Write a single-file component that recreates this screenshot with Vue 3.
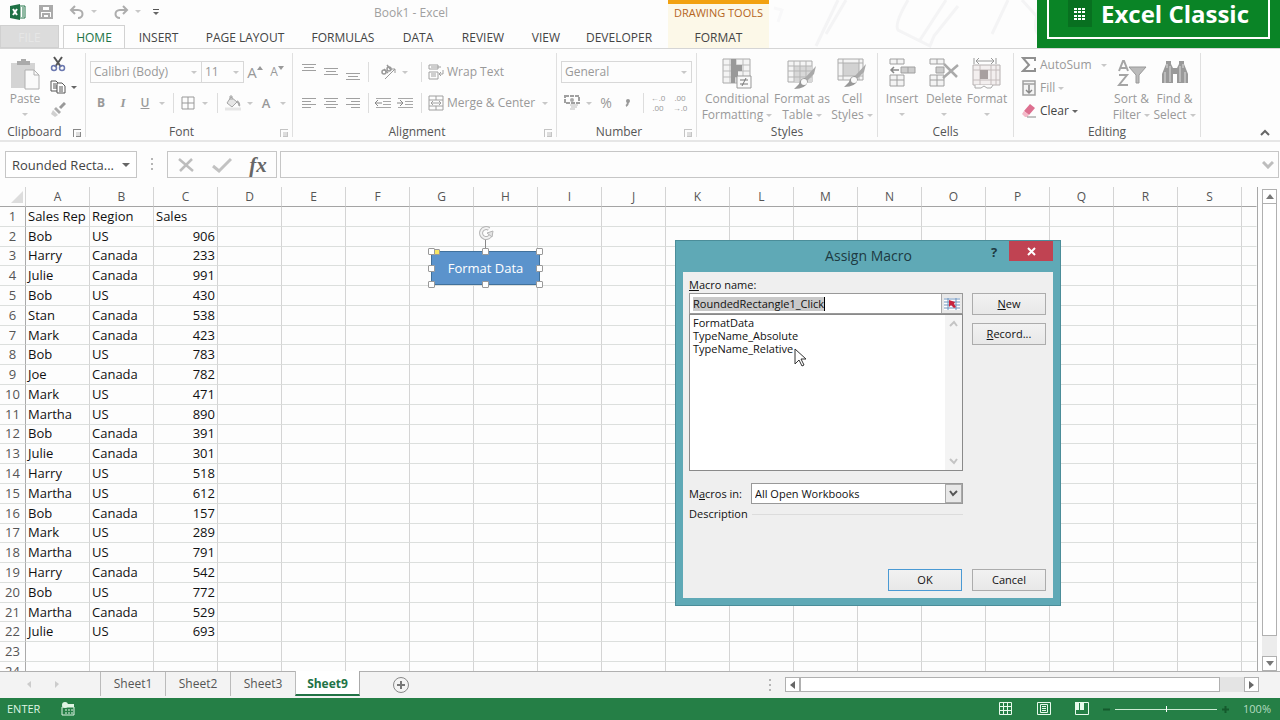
<script setup>
import { ref } from 'vue'

const tabs = ['HOME', 'INSERT', 'PAGE LAYOUT', 'FORMULAS', 'DATA', 'REVIEW', 'VIEW', 'DEVELOPER']
const columns = 'ABCDEFGHIJKLMNOPQRS'.split('')
const data = [
  ['Sales Rep', 'Region', 'Sales'],
  ['Bob', 'US', 906],
  ['Harry', 'Canada', 233],
  ['Julie', 'Canada', 991],
  ['Bob', 'US', 430],
  ['Stan', 'Canada', 538],
  ['Mark', 'Canada', 423],
  ['Bob', 'US', 783],
  ['Joe', 'Canada', 782],
  ['Mark', 'US', 471],
  ['Martha', 'US', 890],
  ['Bob', 'Canada', 391],
  ['Julie', 'Canada', 301],
  ['Harry', 'US', 518],
  ['Martha', 'US', 612],
  ['Bob', 'Canada', 157],
  ['Mark', 'US', 289],
  ['Martha', 'US', 791],
  ['Harry', 'Canada', 542],
  ['Bob', 'US', 772],
  ['Martha', 'Canada', 529],
  ['Julie', 'US', 693],
  [],
  [],
]
const sheets = ['Sheet1', 'Sheet2', 'Sheet3', 'Sheet9']
const macros = ['FormatData', 'TypeName_Absolute', 'TypeName_Relative']
const macroName = ref('RoundedRectangle1_Click')
const handles = ['nw', 'n', 'ne', 'w', 'e', 'sw', 's', 'se']
const zoom = ref(50)
</script>

<template>
  <div class="app">
    <header class="top">
      <svg class="sketch" viewBox="0 0 270 48" aria-hidden="true">
        <g fill="none" stroke="#f4f4f5" stroke-width="3">
          <path d="M68 0 46 46M76 0 56 34" />
          <path d="M138 0q-14 24-10 30l32 16 4-10L188 6" />
          <path d="M176 0 150 40" />
          <path d="M238 0 222 34M252 0l38 42M270 4q-8 24-2 30" />
          <path d="M4 8l8 2-4 12" stroke="#f8f8f9" />
        </g>
      </svg>
      <div class="titlebar">
        <div class="quick">
          <svg width="18" height="18" viewBox="0 0 18 18" role="img" aria-label="Excel">
            <path d="M9 3h7v12H9z" fill="#fff" stroke="#217346" />
            <path d="M10 5h2M13 5h2M10 7h2M13 7h2M10 9h2M13 9h2M10 11h2M13 11h2M10 13h2M13 13h2" stroke="#217346" />
            <path d="M1 3 11 1v16L1 15z" fill="#1e7145" />
            <path d="m4 6 4 6M8 6l-4 6" stroke="#fff" stroke-width="2" />
          </svg>
          <button aria-label="Save">
            <svg width="14" height="14" viewBox="0 0 14 14"><path d="M1 1h12v12H1zM3 1v5h8V1M4 13V9h6v4" fill="none" stroke="#aaa" stroke-width="2" /></svg>
          </button>
          <button aria-label="Undo">
            <svg width="16" height="14" viewBox="0 0 16 14"><path d="M6 1 2 5l4 4M2 5h7c6 0 6 8 0 8" fill="none" stroke="#adadad" stroke-width="2" /></svg>
            <i class="dd pale"></i>
          </button>
          <button aria-label="Redo">
            <svg width="16" height="14" viewBox="0 0 16 14"><path d="m10 1 4 4-4 4M14 5H7c-6 0-6 8 0 8" fill="none" stroke="#adadad" stroke-width="2" /></svg>
            <i class="dd pale"></i>
          </button>
          <button aria-label="Customize toolbar" class="customize"><i class="bar"></i><i class="dd dark"></i></button>
        </div>
        <div class="title">Book1 - Excel</div>
        <div class="context">DRAWING TOOLS</div>
      </div>
      <nav class="tabs">
        <button class="file">FILE</button>
        <button v-for="(t, i) in tabs" :key="t" :class="{ active: i === 0 }">{{ t }}</button>
        <button class="format">FORMAT</button>
      </nav>
      <div class="banner">
        <div class="bannerBox">
          <span class="bannerIcon">
            <svg width="12" height="14" viewBox="0 0 12 14"><path d="M0 2h3M4 2h3M8 2h3M0 5h3M4 5h3M8 5h3M0 9h3M4 9h3M8 9h3M0 12h3M4 12h3M8 12h3" stroke="#fff" stroke-width="2" /></svg>
          </span>
          Excel Classic
        </div>
      </div>
    </header>

    <section class="ribbon">
      <div class="group g-clip">
        <div class="body">
          <button class="big">
            <svg width="30" height="32" viewBox="0 0 30 32">
              <path d="M1 5h24v25H1z" fill="#d4d4d4" />
              <path d="M7 7V3h4V1h5v2h4v4z" fill="#aaa" />
              <path d="M15 12h9l5 5v14H15z" fill="#fafafa" stroke="#b0b0b0" />
              <path d="M24 12v5h5" fill="none" stroke="#b0b0b0" />
            </svg>
            <span>Paste</span><i class="dd pale"></i>
          </button>
          <div class="smalls">
            <button aria-label="Cut">
              <svg width="16" height="16" viewBox="0 0 16 16">
                <path d="m4 1 7 10M12 1 5 11" stroke="#555" stroke-width="2" />
                <circle cx="4" cy="12" r="2.5" fill="none" stroke="#6b78b0" stroke-width="1.5" /><circle cx="12" cy="12" r="2.5" fill="none" stroke="#6b78b0" stroke-width="1.5" />
              </svg>
            </button>
            <button aria-label="Copy">
              <svg width="16" height="16" viewBox="0 0 16 16">
                <path d="M1 2h5l3 3v7H1zM3 5h3M3 7h4M3 9h4" fill="#fff" stroke="#555" />
                <path d="M7 4h5l3 3v7H7z" fill="#fff" stroke="#555" /><path d="M9 8h4M9 10h4M9 12h4" stroke="#555" />
              </svg>
              <i class="dd dark"></i>
            </button>
            <button aria-label="Format Painter">
              <svg width="16" height="16" viewBox="0 0 16 16">
                <path d="m15 1-5 5" stroke="#999" stroke-width="3" /><path d="m6 5 5 5-2 2-5-5z" fill="#aaa" /><path d="m3 8 5 5-3 2-4-3z" fill="#d0d0d0" />
              </svg>
            </button>
          </div>
        </div>
        <div class="caption">Clipboard<button class="launch dark" aria-label="Clipboard options"></button></div>
      </div>

      <div class="group g-font">
        <div class="body col">
          <div class="row">
            <label class="combo wide"><select aria-label="Font" disabled><option>Calibri (Body)</option></select><i class="dd pale"></i></label>
            <label class="combo size"><select aria-label="Font size" disabled><option>11</option></select><i class="dd pale"></i></label>
            <button class="grow" aria-label="Increase font size">A<svg width="6" height="4"><path d="m0 4 3-4 3 4z" fill="#999" /></svg></button>
            <button class="grow less" aria-label="Decrease font size">A<svg width="6" height="4"><path d="m0 0 3 4 3-4z" fill="#999" /></svg></button>
          </div>
          <div class="row fontTools">
            <button class="b">B</button><button class="i">I</button><button class="u">U</button>
            <button aria-label="Underline style"><i class="dd pale"></i></button><i class="sep"></i>
            <button aria-label="Borders"><svg width="14" height="14"><path d="M1 1h12v12H1zM7 1v12M1 7h12" fill="none" stroke="#999" /></svg></button>
            <button aria-label="Border style"><i class="dd pale"></i></button><i class="sep"></i>
            <button aria-label="Fill color">
              <svg width="16" height="16" viewBox="0 0 16 16"><path d="m6 2 6 5-5 5-5-4z" fill="#e6e6e6" stroke="#a5a5a5" /><path d="M5 5V1h2v4" fill="none" stroke="#a5a5a5" /><path d="M12 6q3 3 2 5" fill="none" stroke="#aaa" stroke-width="2" /><path d="M0 14h16" stroke="#e6e6e6" stroke-width="3" /></svg>
            </button>
            <button aria-label="Fill colors"><i class="dd pale"></i></button>
            <button class="fc">A</button>
            <button aria-label="Font colors"><i class="dd pale"></i></button>
          </div>
        </div>
        <div class="caption">Font<button class="launch" aria-label="Font options"></button></div>
      </div>

      <div class="group g-align">
        <div class="body alignGrid">
          <button aria-label="Top align"><svg width="14" height="18"><path d="M0 1.500h14M2 4.500h10M0 7.500h14" stroke="#a0a0a0" /></svg></button>
          <button aria-label="Middle align"><svg width="14" height="18"><path d="M0 5.500h14M2 8.500h10M0 11.500h14" stroke="#a0a0a0" /></svg></button>
          <button aria-label="Bottom align"><svg width="14" height="18"><path d="M0 10.500h14M2 13.500h10M0 16.500h14" stroke="#a0a0a0" /></svg></button>
          <i class="sep"></i>
          <button class="orient" aria-label="Orientation">
            <svg width="18" height="18" viewBox="0 0 18 18"><g fill="none" stroke="#999"><path d="m5 16 10-10M11 6h4v4" /><circle cx="4" cy="9" r="2" stroke-width="1.500" /><path d="m4 6 4 4M7 2l4 5" stroke-width="1.500" /><circle cx="9" cy="6" r="2" stroke-width="1.500" /></g></svg>
            <i class="dd pale"></i>
          </button>
          <i class="sep"></i>
          <button class="lab">
            <svg width="16" height="16" viewBox="0 0 16 16"><g fill="none" stroke="#a0a0a0"><path d="M1 1h9v4H1zM1 8h9v7H1zM3 3h10M3 10h5M3 12h5M15 6v4h-4M13 8l-2 2 2 2" /></g></svg>
            Wrap Text
          </button>
          <button aria-label="Align left"><svg width="14" height="12"><path d="M0 1.500h14M0 4.500h9M0 7.500h14M0 10.500h9" stroke="#a0a0a0" /></svg></button>
          <button aria-label="Center"><svg width="14" height="12"><path d="M0 1.500h14M2 4.500h10M0 7.500h14M2 10.500h10" stroke="#a0a0a0" /></svg></button>
          <button aria-label="Align right"><svg width="14" height="12"><path d="M0 1.500h14M5 4.500h9M0 7.500h14M5 10.500h9" stroke="#a0a0a0" /></svg></button>
          <i class="sep"></i>
          <div class="indents">
            <button aria-label="Decrease indent"><svg width="16" height="12"><path d="M1 1.500h15M8 4.500h8M8 7.500h8M1 10.500h15" stroke="#a8a8a8" /><path d="M0 6h7M3 3 0 6l3 3" fill="none" stroke="#888" /></svg></button>
            <button aria-label="Increase indent"><svg width="16" height="12"><path d="M1 1.500h15M8 4.500h8M8 7.500h8M1 10.500h15" stroke="#a8a8a8" /><path d="M0 6h6M3 3l3 3-3 3" fill="none" stroke="#888" /></svg></button>
          </div>
          <i class="sep"></i>
          <button class="lab">
            <svg width="16" height="16" viewBox="0 0 16 16"><g fill="none" stroke="#a0a0a0"><path d="M1 1h14v14H1zM1 5h14M1 11h14M8 1v4M8 11v4M3 8h10M5 6 3 8l2 2M11 6l2 2-2 2" /></g></svg>
            Merge &amp; Center <i class="dd pale"></i>
          </button>
        </div>
        <div class="caption">Alignment<button class="launch" aria-label="Alignment options"></button></div>
      </div>

      <div class="group g-num">
        <div class="body col">
          <div class="row"><label class="combo full"><select aria-label="Number format" disabled><option>General</option></select><i class="dd pale"></i></label></div>
          <div class="row numTools">
            <button aria-label="Accounting format"><svg width="16" height="16" viewBox="0 0 16 16"><path d="M1 1h14v7H1z" fill="none" stroke="#a0a0a0" stroke-width="2" stroke-dasharray="4 1" /><circle cx="8" cy="5" r="2" fill="#aaa" /><path d="M6 10h8M7 12h6M6 14h5" stroke="#bbb" /></svg></button>
            <button aria-label="Accounting formats"><i class="dd pale"></i></button>
            <button class="pct">%</button>
            <button class="comma" aria-label="Comma style"><svg width="6" height="10"><path d="M3 3v1q0 3-2 4" fill="none" stroke="#999" stroke-width="2" /><circle cx="3" cy="3" r="2" fill="#999" /></svg></button><i class="sep"></i>
            <button class="dec"><span>←.0</span><span>.00</span></button>
            <button class="dec"><span>.00</span><span>→.0</span></button>
          </div>
        </div>
        <div class="caption">Number<button class="launch" aria-label="Number options"></button></div>
      </div>

      <div class="group g-styles">
        <div class="body bigs">
          <button class="big">
            <svg width="30" height="32" viewBox="0 0 30 32">
              <path d="M1 1h27v24H1z" fill="#f4f4f4" stroke="#aaa" /><path d="M1 7h27M1 13h27M1 19h27M8 1v24M14 1v24M21 1v24" stroke="#bbb" />
              <path d="M9 1h5v6h-5zM9 7h11v6H9zM9 13h7v6H9zM9 19h4v6H9z" fill="#999" />
              <path d="M15 18h14v12H15z" fill="#fafafa" stroke="#999" /><path d="M18 22h8M18 26h8M24 20l-4 8" stroke="#777" />
            </svg>
            <span>Conditional</span><span>Formatting <i class="dd pale"></i></span>
          </button>
          <button class="big">
            <svg width="30" height="32" viewBox="0 0 30 32">
              <path d="M1 3h24v21H1z" fill="#f4f4f4" stroke="#aaa" /><path d="M7 8h18v16H7z" fill="#d8d8d8" /><path d="M1 8h24M1 13h24M1 19h24M7 3v21M13 3v21M19 3v21" stroke="#b5b5b5" />
              <path d="m29 8-2 8-7 7-3-2z" fill="#aaa" /><path d="M18 20q-5 0-6 6l-5 5q12 0 14-8z" fill="#999" /><circle cx="17" cy="24" r="3" fill="#fafafa" />
            </svg>
            <span>Format as</span><span>Table <i class="dd pale"></i></span>
          </button>
          <button class="big">
            <svg width="30" height="32" viewBox="0 0 30 32">
              <path d="M1 1h25v21H1z" fill="#f4f4f4" stroke="#aaa" /><path d="M6 5h16v13H6z" fill="#d2d2d2" /><path d="M1 5h25M1 18h25M6 1v21M22 1v21" stroke="#b0b0b0" />
              <path d="m29 6-2 8-7 7-3-2z" fill="#aaa" /><path d="M18 18q-5 0-6 6l-5 5q12 0 14-8z" fill="#999" /><circle cx="17" cy="22" r="3" fill="#fafafa" />
            </svg>
            <span>Cell</span><span>Styles <i class="dd pale"></i></span>
          </button>
        </div>
        <div class="caption">Styles</div>
      </div>

      <div class="group g-cells">
        <div class="body bigs">
          <button class="big">
            <svg width="30" height="32" viewBox="0 0 30 32"><path d="M3 1h14v5H3zM10 1v5M3 17h14v11H3zM10 17v11M3 22h14" fill="#f4f4f4" stroke="#a0a0a0" /><path d="M14 9h14v6H14zM21 9v6" fill="#ccc" stroke="#a0a0a0" /><path d="M4 12h8M7 9l-3 3 3 3" fill="none" stroke="#888" stroke-width="1.500" /></svg>
            <span>Insert</span><i class="dd pale"></i>
          </button>
          <button class="big">
            <svg width="30" height="32" viewBox="0 0 30 32"><path d="M1 1h14v5H1zM8 1v5M1 17h14v11H1zM8 17v11M1 22h14" fill="#f4f4f4" stroke="#a0a0a0" /><path d="M7 9h8v6H7z" fill="#ccc" stroke="#a0a0a0" /><path d="m15 6 13 13M29 7 14 20" fill="none" stroke="#aaa" stroke-width="2.500" /></svg>
            <span>Delete</span><i class="dd pale"></i>
          </button>
          <button class="big">
            <svg width="30" height="32" viewBox="0 0 30 32"><path d="M1 7h27v20H1z" fill="#f3efef" stroke="#b5b0b0" /><path d="M1 12h27M1 22h27M8 7v20M19 7v20M24 7v20" stroke="#c4bcbc" /><path d="M8 12h8v9H8z" fill="#a8a0a0" /><path d="M2 0v6M24 0v6M4 3h18M7 0 4 3l3 3M19 0l3 3-3 3" fill="none" stroke="#999" /><path d="M3 27v3h6l3-2 3 2h4l2-3" fill="#fafafa" stroke="#aaa" /></svg>
            <span>Format</span><i class="dd pale"></i>
          </button>
        </div>
        <div class="caption">Cells</div>
      </div>

      <div class="group g-edit">
        <div class="body">
          <div class="editList">
            <button class="lab"><svg width="16" height="16" viewBox="0 0 16 16"><path d="M14 4V1H2l6 7-6 6h12v-3" fill="none" stroke="#909090" stroke-width="2" /></svg>AutoSum <i class="dd pale far"></i></button>
            <button class="lab"><svg width="16" height="16" viewBox="0 0 16 16"><path d="M2 1h12v14H2zM2 4h12" fill="#f4f4f4" stroke="#a0a0a0" stroke-width="1.500" /><path d="M8 5v8M5 10l3 3 3-3" fill="none" stroke="#888" stroke-width="1.500" /></svg>Fill <i class="dd pale"></i></button>
            <button class="lab on"><svg width="16" height="16" viewBox="0 0 16 16"><path d="m9 1 5 4-6 7-5-4z" fill="#dd6f8f" /><path d="m3 8 5 4-2 2H4l-3-3z" fill="#f3b9c8" /><path d="M6 14h9" stroke="#888" /></svg>Clear <i class="dd dark"></i></button>
          </div>
          <button class="big">
            <svg width="30" height="32" viewBox="0 0 30 32"><path d="m2 13 4-10h1l4 10M4 10h6M2 17h8L2 27h9" fill="none" stroke="#a5a5a5" stroke-width="2" /><path d="M12 9h17l-7 8v8h-3v-8z" fill="#bbb" stroke="#999" /></svg>
            <span>Sort &amp;</span><span>Filter <i class="dd pale"></i></span>
          </button>
          <button class="big">
            <svg width="30" height="32" viewBox="0 0 30 32"><path d="M6 3h5v3l2 4h4l2-4V3h5v3l4 10v9H17v-9h-4v9H2v-9L6 6z" fill="#999" /><path d="M7 6v4M23 6v4M5 14v11M25 14v11M10 8v16M20 8v16" stroke="#ddd" /></svg>
            <span>Find &amp;</span><span>Select <i class="dd pale"></i></span>
          </button>
        </div>
        <div class="caption">Editing</div>
      </div>
      <button class="collapse" aria-label="Collapse ribbon"><svg width="10" height="8"><path d="m1 6 4-4 4 4" fill="none" stroke="#666" stroke-width="2" /></svg></button>
    </section>

    <section class="formula">
      <div class="namebox"><input aria-label="Name box" value="Rounded Recta..." /><button aria-label="Names"><i class="dd dark wideDd"></i></button></div>
      <i class="dots"></i>
      <div class="fxbox">
        <button aria-label="Cancel entry"><svg width="18" height="16"><path d="m2 2 14 12M15 2 3 14" stroke="#bdbdbd" stroke-width="2.500" /></svg></button>
        <button aria-label="Accept entry"><svg width="20" height="16"><path d="m1 9 6 5L19 2" fill="none" stroke="#c2c2c2" stroke-width="3" /></svg></button>
        <button class="fx" aria-label="Insert function">fx</button>
      </div>
      <div class="fbar"><input aria-label="Formula" /><svg width="12" height="8"><path d="m1 1 5 5 5-5" fill="none" stroke="#bdbdbd" stroke-width="3" /></svg></div>
    </section>

    <main class="sheet">
      <div class="grid">
        <table>
          <colgroup><col class="rh" /><col v-for="c in columns" :key="c" class="cc" /><col /></colgroup>
          <thead><tr><th><i class="corner"></i></th><th v-for="c in columns" :key="c">{{ c }}</th><th></th></tr></thead>
          <tbody>
            <tr v-for="(r, i) in data" :key="i">
              <th>{{ i + 1 }}</th>
              <td v-for="(c, j) in columns" :key="c" :class="{ num: j === 2 && i > 0 }">{{ r[j] }}</td>
              <td></td>
            </tr>
          </tbody>
        </table>
      </div>
      <div class="vscroll">
        <button aria-label="Scroll up"><svg width="8" height="5"><path d="m0 5 4-5 4 5z" fill="#777" /></svg></button>
        <i class="thumb"></i><i class="track"></i>
        <button aria-label="Scroll down"><svg width="8" height="5"><path d="m0 0 4 5 4-5z" fill="#777" /></svg></button>
      </div>

      <div class="shape">
        <svg class="rotate" width="16" height="26" viewBox="0 0 16 26"><path d="M7.500 13v13" stroke="#888" /><path d="M13 8a5 5 0 1 1-2-5" fill="none" stroke="#b5b5b5" stroke-width="4" /><path d="M13 8a5 5 0 1 1-2-5" fill="none" stroke="#f2f2f2" stroke-width="2" /><path d="m9 7 6-2-1 6z" fill="#e4e4e4" stroke="#b5b5b5" /></svg>
        Format Data
        <i v-for="h in handles" :key="h" class="handle" :class="h"></i>
        <i class="handle yellow"></i>
      </div>

      <form class="dialog" role="dialog" aria-label="Assign Macro" @submit.prevent>
        <div class="dhead">
          <h2>Assign Macro</h2>
          <button type="button" class="help">?</button>
          <button type="button" class="close" aria-label="Close"><svg width="9" height="9"><path d="m1 1 7 7M8 1 1 8" stroke="#fff" stroke-width="2" /></svg></button>
        </div>
        <div class="dbody">
          <div class="left">
            <label for="macro"><u>M</u>acro name:</label>
            <div class="nameField">
              <input id="macro" v-model="macroName" /><i class="caret"></i>
              <button type="button" aria-label="Pick reference">
                <svg width="16" height="12" viewBox="0 0 16 12"><path d="M0 0h16v12H0z" fill="#fff" /><path d="M0 1h16M0 4h16M0 7h16M0 10h16M4 0v12M12 0v12" stroke="#6f93bd" /><path d="m5 2 6 2-1 2 2 3-2 1-3-3-2 2z" fill="#c8253e" /></svg>
              </button>
            </div>
            <div class="list">
              <select multiple size="11" aria-label="Macros"><option v-for="m in macros" :key="m">{{ m }}</option></select>
              <div class="lscroll">
                <svg width="9" height="7"><path d="m1 6 4-4 3 4" fill="none" stroke="#c4c4c4" stroke-width="2" /></svg>
                <svg width="9" height="7"><path d="m1 1 4 4 3-4" fill="none" stroke="#c4c4c4" stroke-width="2" /></svg>
              </div>
            </div>
            <div class="inRow">
              <label for="inbooks">M<u>a</u>cros in:</label>
              <div class="inSel">
                <select id="inbooks"><option>All Open Workbooks</option></select>
                <span><svg width="9" height="7"><path d="m1 1 3 4 4-4" fill="none" stroke="#555" stroke-width="2" /></svg></span>
              </div>
            </div>
            <div class="desc">Description<i></i></div>
          </div>
          <div class="right">
            <button type="button"><u>N</u>ew</button>
            <button type="button"><u>R</u>ecord...</button>
          </div>
          <div class="foot"><button class="ok">OK</button><button type="button">Cancel</button></div>
        </div>
        <svg class="pointer" width="14" height="20" viewBox="0 0 14 20"><path d="M1 1v15l4-4 3 6 2-1-3-6h5z" fill="#fff" stroke="#333" /></svg>
      </form>
    </main>

    <footer>
      <div class="sheetbar">
        <div class="nav">
          <button aria-label="Previous sheets"><svg width="4" height="7"><path d="M4 0v7L0 3z" fill="#ccc" /></svg></button>
          <button aria-label="Next sheets"><svg width="4" height="7"><path d="M0 0v7l4-4z" fill="#ccc" /></svg></button>
        </div>
        <button v-for="s in sheets" :key="s" class="stab" :class="{ active: s === 'Sheet9' }">{{ s }}</button>
        <button class="add" aria-label="New sheet"><svg width="18" height="18"><circle cx="9" cy="9" r="7.500" fill="none" stroke="#888" /><path d="M9 5v8M5 9h8" stroke="#777" stroke-width="2" /></svg></button>
        <i class="dots"></i>
        <div class="hscroll">
          <button aria-label="Scroll left"><svg width="5" height="8"><path d="M5 0v8L0 4z" fill="#666" /></svg></button>
          <i class="thumb"></i><i class="track"></i>
          <button aria-label="Scroll right"><svg width="5" height="8"><path d="M0 0v8l5-4z" fill="#666" /></svg></button>
        </div>
      </div>
      <div class="status">
        <span>ENTER</span>
        <button aria-label="Record macro"><svg width="14" height="14" viewBox="0 0 14 14"><path d="M1 5h12v8H1zM7 3h6M4 8h2M7 8h2M10 8h2M4 11h2M7 11h2M10 11h2" fill="none" stroke="#dff5e4" /><path d="M6 2h7v3H6z" fill="#dff5e4" /><circle cx="4" cy="3" r="3" fill="#dff5e4" /></svg></button>
        <div class="views">
          <button aria-label="Normal"><svg width="14" height="14"><path d="M.5.500h12v12h-12zM4.500 1v12M8.500 1v12M1 4.500h12M1 8.500h12" fill="none" stroke="#e8faec" /></svg></button>
          <button aria-label="Page layout"><svg width="14" height="14"><path d="M.5.500h13v12H.5zM3.500 2.500h7v8h-7zM5 4.500h4M5 6.500h4M5 8.500h4" fill="none" stroke="#e8faec" /></svg></button>
          <button aria-label="Page break"><svg width="14" height="14"><path d="M.5.500h13v12H.5z" fill="none" stroke="#e8faec" /><path d="M0 0h4v8H0zM5 0h4v8H5z" fill="#e8faec" /></svg></button>
        </div>
        <button class="z" aria-label="Zoom out"><svg width="7" height="7"><path d="M0 3.500h7" stroke="#145a2c" stroke-width="2" /></svg></button>
        <input v-model="zoom" type="range" aria-label="Zoom" />
        <button class="z" aria-label="Zoom in"><svg width="7" height="7"><path d="M0 3.500h7M3.500 0v7" stroke="#145a2c" stroke-width="2" /></svg></button>
        <span class="pctz">100%</span>
      </div>
    </footer>
  </div>
</template>

<style>
body { margin: 0; background: #fdfdfd; }
</style>

<style scoped>
* { box-sizing: border-box; }
.app { height: 100vh; display: flex; flex-direction: column; overflow: hidden; background: #fdfdfd; font: 12px/16px "Open Sans", "Noto Sans", sans-serif; color: #444; }
button { font: inherit; color: inherit; background: none; border: 0; padding: 0; margin: 0; display: flex; align-items: center; justify-content: center; white-space: nowrap; }
input, select { font: inherit; color: inherit; margin: 0; padding: 0; border: 0; border-radius: 0; outline: 0; background: transparent; appearance: none; min-width: 0; opacity: 1; }
svg { display: block; flex: none; }
.dd { display: inline-block; flex: none; width: 0; height: 0; border: 3px solid transparent; border-top-color: #666; border-bottom: 0; vertical-align: middle; }
.dd.pale { border-top-color: #c8c8c8; }
.dd.wideDd { border-width: 4px; border-bottom: 0; }

.top { position: relative; flex: none; border-bottom: 1px solid #d5d5d5; }
.sketch { position: absolute; left: 770px; top: 0; width: 270px; height: 48px; }
.titlebar { display: grid; grid-template-columns: 154px 514px 101px; height: 25px; line-height: 24px; }
.quick { display: flex; align-items: center; padding: 0 0 2px 9px; gap: 12px; }
.quick button { gap: 7px; }
.quick button + button { margin-left: 4px; gap: 6px; }
.quick .customize { flex-direction: column; gap: 2px; margin: 0; }
.quick button + .customize { margin-left: 0; gap: 2px; }
.bar { width: 6px; height: 1px; background: #555; }
.title { text-align: center; color: #a0a0a0; padding-top: 1px; }
.context { background: #fcf8e8; border-top: 4px solid #f2a110; color: #b5651d; text-align: center; line-height: 18px; font-size: 11px; }
.tabs { display: grid; grid-template-columns: 63px 62px 67px 106px 90px 60px 70px 56px 90px; grid-auto-flow: column; grid-auto-columns: 105px; height: 23px; }
.tabs button { color: #444; padding-top: 2px; }
.tabs .file { background: #dcdcdc; color: #e6e6e6; margin-right: 4px; border: 1px solid #d0d0d0; }
.tabs .active { color: #217346; background: #fefefe; border: 1px solid #d2d2d2; border-bottom: 0; padding-top: 1px; }
.tabs .format { margin-left: 4px; background: #fcf8e8; }
.banner { position: absolute; right: 0; top: 0; width: 243px; height: 48px; background: #0a8426; padding: 0 10px; }
.bannerBox { height: 39px; border: 2px solid #fff; border-top: 0; display: flex; padding-left: 19px; gap: 9px; color: #fff; font-size: 24px; font-weight: 700; line-height: 28px; white-space: nowrap; }
.bannerIcon { width: 24px; height: 27px; background: #087020; display: flex; align-items: center; justify-content: center; }

.ribbon { position: relative; flex: none; height: 93px; display: flex; border-bottom: 2px solid #e6e6e6; color: #999; padding-top: 4px; }
.group { flex: none; display: flex; flex-direction: column; background: linear-gradient(#e0e0e0, #e0e0e0) right top / 1px 84px no-repeat; height: 87px; padding-right: 1px; }
.g-clip { width: 86px; } .g-font { width: 207px; } .g-align { width: 264px; } .g-num { width: 140px; } .g-styles { width: 181px; } .g-cells { width: 136px; } .g-edit { width: 187px; }
.body { flex: 1; display: flex; min-height: 0; }
.body.col { flex-direction: column; padding: 8px 0 0 4px; gap: 9px; }
.caption { position: relative; height: 16px; text-align: center; color: #555; flex: none; }
.g-clip .caption { padding-right: 16px; }
.g-align .caption, .g-num .caption, .g-font .caption { padding-right: 15px; }
.launch { position: absolute; right: 4px; top: 5px; width: 8px; height: 8px; border: 1px solid #c4c4c4; border-right: 0; border-bottom: 0; }
.launch::after { content: ""; position: absolute; right: 0; bottom: 0; width: 4px; height: 4px; border: 1px solid #c4c4c4; border-left: 0; border-top: 0; background: #ddd; }
.launch.dark, .launch.dark::after { border-color: #888; }
.row { display: flex; align-items: center; height: 22px; }
.big { flex-direction: column; justify-content: flex-start; padding-top: 5px; height: 70px; }
.big svg { margin-bottom: 1px; }
.big > .dd { margin-top: 6px; }
.g-clip .big { width: 50px; }
.smalls { display: flex; flex-direction: column; gap: 7px; padding-top: 3px; }
.smalls button { justify-content: flex-start; gap: 5px; }
.combo { display: grid; align-items: center; height: 22px; border: 1px solid #d8d8d8; }
.combo select, .combo .dd { grid-area: 1 / 1; }
.combo select { padding-left: 3px; color: #999; height: 20px; width: 100%; }
.combo .dd { justify-self: end; margin-right: 4px; pointer-events: none; }
.wide { width: 112px; } .size { width: 42px; border-left: 0; } .full { width: 131px; }
.grow { width: 22px; font-size: 15px; align-items: flex-start; }
.grow svg { margin-top: 2px; }
.grow.less { font-size: 12px; }
.fontTools { display: grid; grid-template-columns: 22px 22px 22px 12px 10px 20px 14px 10px 22px 11px 22px 11px; }
.sep { width: 1px; height: 20px; background: #ddd; justify-self: center; }
.b { font-weight: 700; } .i { font: italic bold 13px/16px "Liberation Serif", serif; } .u { text-decoration: underline; font-weight: 600; } .fc { font-weight: 600; font-size: 13px; }
.alignGrid { display: grid; grid-template-columns: 22px 22px 22px 8px 44px 10px 1fr; grid-template-rows: 22px 22px; row-gap: 9px; padding: 8px 0 0 5px; align-items: center; }
.orient { gap: 4px; }
.indents { display: flex; justify-content: space-around; }
.lab { gap: 3px; justify-content: flex-start; }
.alignGrid .lab { padding-left: 2px; }
.alignGrid .lab .dd { margin-left: 4px; }
.numTools { display: grid; grid-template-columns: 22px 12px 22px 22px 8px 22px 22px; }
.pct { font-size: 14px; }
.dec { flex-direction: column; font-size: 8px; line-height: 10px; }
.bigs { display: grid; }
.g-styles .bigs { grid-template-columns: 80px 50px 50px; }
.g-cells .bigs { grid-template-columns: 42px 42px 44px; padding-left: 3px; }
.editList { display: flex; flex-direction: column; gap: 7px; padding: 4px 0 0 7px; width: 96px; }
.editList .on { color: #444; }
.far { margin-left: 6px; }
.g-edit .big { width: 43px; }
.collapse { position: absolute; right: 10px; bottom: 3px; }

.formula { flex: none; display: flex; align-items: center; height: 45px; padding: 0 1px 0 5px; color: #444; font-size: 13px; }
.namebox { display: flex; width: 132px; height: 27px; border: 1px solid #c6c6c6; background: #fff; }
.namebox input { flex: 1; padding-left: 6px; }
.namebox button { width: 20px; }
.dots { width: 2px; height: 14px; margin: 0 14px; background: repeating-linear-gradient(#b5b5b5 0 2px, transparent 2px 5px); }
.fxbox { display: grid; grid-template-columns: 36px 36px 36px; width: 110px; height: 27px; border: 1px solid #c6c6c6; }
.fx { font: italic bold 21px/24px "Liberation Serif", serif; color: #666; }
.fbar { flex: 1; display: flex; align-items: center; height: 27px; margin-left: 3px; border: 1px solid #c6c6c6; padding-right: 4px; }
.fbar input { flex: 1; }

.sheet { position: relative; flex: 1; min-height: 0; display: flex; gap: 4px; padding-right: 3px; }
.grid { flex: 1; overflow: hidden; min-width: 0; border-right: 1px solid #a8a8a8; }
table { width: 100%; height: 495px; table-layout: fixed; border-collapse: separate; border-spacing: 0; font-size: 13px; line-height: 17px; }
.rh { width: 26px; } .cc { width: 64px; }
th, td { padding: 0 2px; overflow: hidden; white-space: nowrap; font-weight: 400; color: #111; border-right: 1px solid #d4d4d4; border-bottom: 1px solid #dcdfdd; }
td:last-child, th:last-child { border-right-color: transparent; }
th { color: #555; text-align: center; }
tbody th { border-right-color: #aaa; padding: 0; }
thead tr { height: 20px; }
thead th { border-bottom-color: #a4a4a4; font-size: 12px; }
.num { text-align: right; }
.corner { display: block; width: 0; height: 0; margin-left: 9px; border: 6px solid transparent; border-right-color: #ddd; border-bottom-color: #ddd; }
.vscroll { flex: none; width: 15px; display: flex; flex-direction: column; padding-top: 2px; }
.vscroll button, .hscroll button { flex: none; width: 15px; height: 15px; border: 1px solid #b0b0b0; background: #fff; }
.vscroll .thumb { flex: 434; border: 1px solid #b0b0b0; border-top: 0; background: #fff; }
.vscroll .track { flex: 20; background: #ececec; }

.shape { position: absolute; left: 431px; top: 64px; width: 109px; height: 34px; background: #5b93cc; border: 1px solid #41719c; color: #fff; font-size: 13px; display: flex; align-items: center; justify-content: center; }
.rotate { position: absolute; left: 46px; top: -26px; }
.handle { position: absolute; width: 7px; height: 7px; background: #fff; border: 1px solid #999; border-radius: 1px; }
.nw, .w, .sw { left: -4px; } .n, .s { left: 50px; } .ne, .e, .se { right: -4px; }
.nw, .n, .ne { top: -4px; } .w, .e { top: 13px; } .sw, .s, .se { bottom: -4px; }
.handle.yellow { left: 2px; top: -3px; width: 6px; height: 6px; background: #f5e663; }

.dialog { position: absolute; left: 675px; top: 53px; width: 386px; background: #5fa9b6; border: 1px solid #4b8d99; padding: 0 7px 7px; font-size: 11px; line-height: 14px; color: #111; }
.dhead { display: flex; height: 31px; align-items: flex-start; }
h2 { flex: 1; margin: 0; padding: 5px 0 0 75px; text-align: center; font-size: 14px; line-height: 20px; font-weight: 400; color: #1d3a42; }
.help { width: 30px; height: 21px; font-weight: 700; font-size: 13px; color: #1d3a42; }
.close { width: 44px; height: 20px; background: #c04352; }
.dbody { background: #efefef; padding: 6px 7px 7px 6px; display: grid; grid-template-columns: 1fr 74px; column-gap: 9px; }
.left { display: flex; flex-direction: column; }
.left label { height: 15px; white-space: nowrap; }
.nameField { display: flex; align-items: center; height: 21px; border: 1px solid #999; background: #fff; padding-left: 3px; }
.nameField input { field-sizing: content; background: #c9c9c9; height: 14px; line-height: 14px; color: #111; }
.caret { width: 1px; height: 14px; background: #000; }
.nameField button { margin-left: auto; width: 21px; height: 19px; background: #e8e8e8; border-left: 1px solid #aaa; }
.list { display: flex; height: 157px; border: 1px solid #8a8a8a; background: #fff; }
.list select { flex: 1; overflow: hidden; padding: 0 1px; height: 155px; }
.list option { padding: 0 2px; height: 13px; min-height: 13px; line-height: 13px; }
.lscroll { width: 17px; background: #f4f4f4; display: flex; flex-direction: column; justify-content: space-between; align-items: center; padding: 5px 0; }
.inRow { display: flex; align-items: center; margin-top: 12px; }
.inRow label { width: 62px; height: 14px; }
.inSel { flex: 1; display: grid; height: 21px; border: 1px solid #999; background: #fff; }
.inSel select { grid-area: 1 / 1; padding-left: 3px; }
.inSel span { grid-area: 1 / 1; justify-self: end; width: 17px; display: flex; align-items: center; justify-content: center; background: #e8e8e8; border: 1px solid #aaa; pointer-events: none; }
.desc { display: flex; align-items: center; gap: 4px; margin-top: 3px; }
.desc i { flex: 1; height: 1px; background: #dcdcdc; }
.right { padding-top: 15px; display: flex; flex-direction: column; gap: 8px; }
.right button, .foot button { width: 74px; height: 22px; border: 1px solid #acacac; background: linear-gradient(#f2f2f2, #e8e8e8); }
.foot { grid-column: 1 / -1; display: flex; justify-content: flex-end; gap: 10px; margin-top: 48px; }
.foot .ok { border-color: #4a9ad4; }
.pointer { position: absolute; left: 118px; top: 107px; }

footer { flex: none; }
.sheetbar { display: flex; align-items: flex-start; height: 27px; background: #f3f3f3; border-top: 1px solid #b0b0b0; padding-right: 21px; }
.nav { display: flex; gap: 24px; width: 100px; padding: 9px 0 0 27px; }
.stab { width: 65px; height: 24px; border-left: 1px solid #bbb; color: #555; }
.stab.active { color: #217346; font-weight: 700; background: #fff; border-right: 1px solid #aaa; border-bottom: 2px solid #217346; margin-top: -1px; height: 25px; padding-top: 3px; }
.add { width: 82px; height: 26px; }
.sheetbar .dots { margin: 7px 14px 0 auto; height: 12px; }
.hscroll { display: flex; width: calc(37% + 8px); height: 15px; margin-top: 5px; }
.hscroll .thumb { flex: 420; border: 1px solid #b0b0b0; background: #fff; }
.hscroll .track { flex: 24; background: #e4e4e4; }
.status { display: flex; align-items: center; height: 22px; background: #257f46; color: #dff5e4; font-size: 11px; padding: 0 9px 0 7px; gap: 21px; }
.views { margin-left: auto; display: flex; gap: 24px; }
.status .z { margin: 0 -7px; }
.status input { width: 102px; height: 14px; margin: 0 -9px; background: linear-gradient(#cdebd4, #cdebd4) center / 100% 1px no-repeat; }
.status input::-webkit-slider-thumb { appearance: none; width: 1px; height: 6px; background: #fff; }
.pctz { color: #b5dcc0; }
</style>
